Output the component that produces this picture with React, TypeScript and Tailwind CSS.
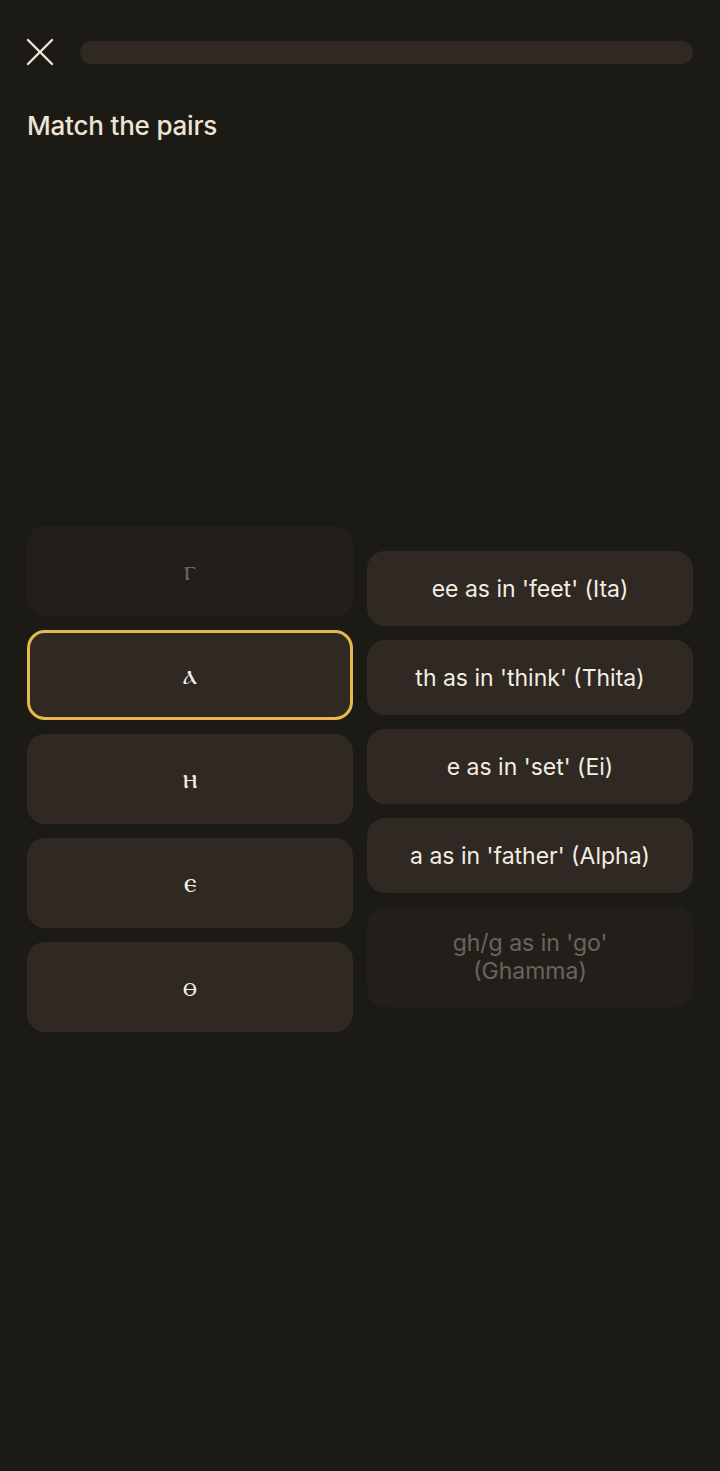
import React from "react";

type Item = { label: string; dim?: boolean; selected?: boolean };

const left: Item[] = [
  { label: "ⲅ", dim: true },
  { label: "ⲁ", selected: true },
  { label: "ⲏ" },
  { label: "ⲉ" },
  { label: "ⲑ" },
];

const right: Item[] = [
  { label: "ee as in 'feet' (Ita)" },
  { label: "th as in 'think' (Thita)" },
  { label: "e as in 'set' (Ei)" },
  { label: "a as in 'father' (Alpha)" },
  { label: "gh/g as in 'go' (Ghamma)", dim: true },
];

function CloseIcon() {
  return (
    <svg width="28" height="28" viewBox="0 0 28 28" fill="none">
      <path d="M2 2 L26 26 M26 2 L2 26" stroke="#efe6d6" strokeWidth="2.4" strokeLinecap="round" />
    </svg>
  );
}

export default function App() {
  return (
    <div
      className="w-[720px] h-[1471px] bg-[#1c1a15] text-[#f1e9dc] flex flex-col"
      style={{ fontFamily: "Inter, Roboto, 'Noto Sans', sans-serif" }}
    >
      <div className="flex items-center gap-[26px] pl-[26px] pr-[27px] pt-[38px]">
        <CloseIcon />
        <div className="flex-1 h-[23px] rounded-full bg-[#2f2823]" />
      </div>
      <h1 className="pl-[27px] mt-[44px] text-[26px] leading-[32px] font-medium text-[#ede4d3] tracking-[-0.2px]">
        Match the pairs
      </h1>
      <div className="flex items-center gap-[14px] px-[27px] mt-[384px]">
        <div className="flex-1 flex flex-col gap-[14px]">
          {left.map((it, i) => (
            <div
              key={i}
              className={
                "h-[90px] rounded-[18px] flex items-center justify-center text-[28px] " +
                (it.dim
                  ? "bg-[#221f1a] text-[#6a645d]"
                  : it.selected
                  ? "bg-[#2f2823] border-[3px] border-[#e6b94c] text-[#f4ede2]"
                  : "bg-[#2f2823] text-[#f4ede2]")
              }
              style={{ fontFamily: "'DejaVu Sans', 'Noto Sans', sans-serif" }}
            >
              {it.label}
            </div>
          ))}
        </div>
        <div className="flex-1 flex flex-col gap-[14px]">
          {right.map((it, i) => (
            <div
              key={i}
              className={
                "rounded-[18px] flex items-center justify-center text-center px-[40px] text-[23px] leading-[28px] " +
                (it.dim
                  ? "h-[100px] bg-[#221f1a] text-[#6a645d]"
                  : "h-[75px] bg-[#2f2823] text-[#f4ede2]")
              }
            >
              {it.label}
            </div>
          ))}
        </div>
      </div>
    </div>
  );
}
